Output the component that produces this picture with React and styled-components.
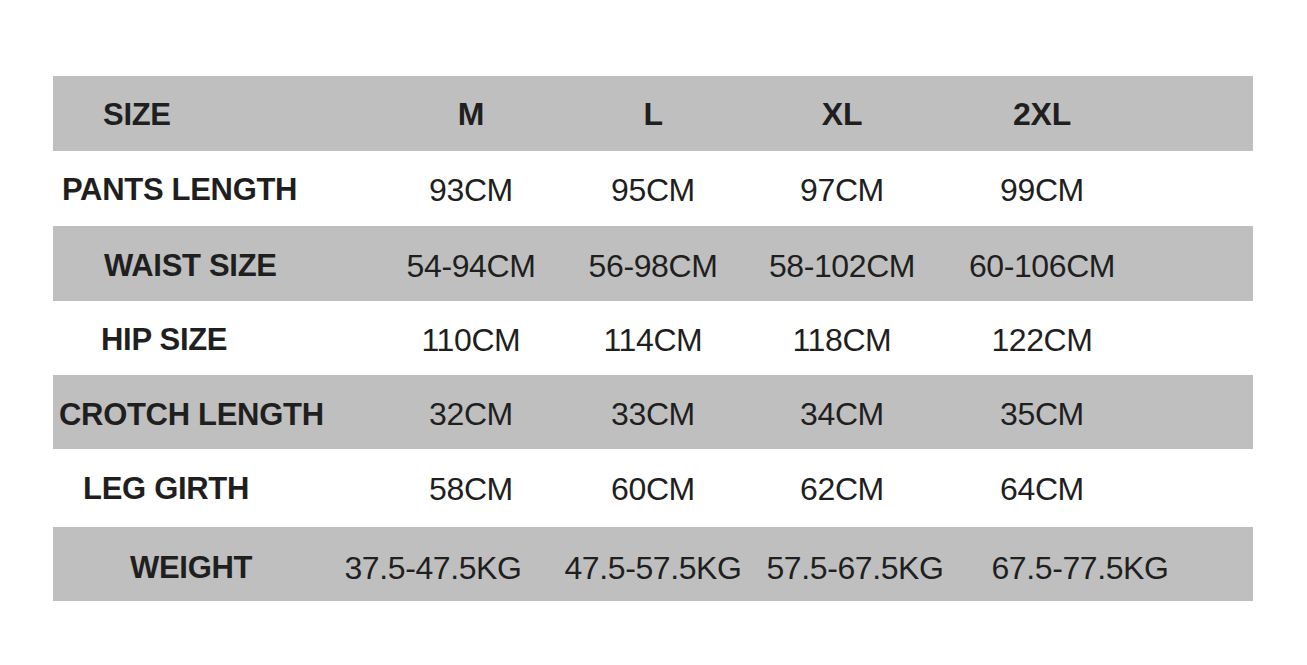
import React from "react";
import styled, { createGlobalStyle } from "styled-components";

const Global = createGlobalStyle`
  html, body { margin: 0; padding: 0; background: #ffffff; }
  body { font-family: "Liberation Sans", Arial, sans-serif; }
`;

const Page = styled.div`
  width: 1307px;
  height: 665px;
  padding: 76px 0 0 53px;
  box-sizing: border-box;
  background: #fff;
`;

const Table = styled.div`
  width: 1200px;
  display: flex;
  flex-direction: column;
`;

const Row = styled.div`
  display: grid;
  grid-template-columns: 327px 182px 182px 196px 204px 1fr;
  height: ${(p) => p.$h || 75}px;
  box-sizing: border-box;
  padding-top: ${(p) => p.$drop || 4}px;
  align-items: center;
  background: ${(p) => (p.$shaded ? "#bfbfbf" : "#ffffff")};
  color: #1f1f1f;
`;

const Label = styled.div`
  padding-left: ${(p) => p.$indent}px;
  font-weight: 700;
  font-size: 31px;
  letter-spacing: -0.3px;
  white-space: nowrap;
`;

const Cell = styled.div`
  display: flex;
  justify-content: center;
  white-space: nowrap;
  font-size: 32px;
  font-weight: ${(p) => (p.$bold ? 700 : 400)};
  letter-spacing: ${(p) => (p.$bold ? "-0.3px" : "-0.4px")};
  padding-left: ${(p) => Math.max(0, (p.$shift || 0) * 2)}px;
  padding-right: ${(p) => Math.max(0, -(p.$shift || 0) * 2)}px;
`;

const rows = [
  { label: "SIZE", indent: 50, values: ["M", "L", "XL", "2XL"], header: true, drop: 2 },
  { label: "PANTS LENGTH", indent: 9, values: ["93CM", "95CM", "97CM", "99CM"], drop: 3 },
  { label: "WAIST SIZE", indent: 51, values: ["54-94CM", "56-98CM", "58-102CM", "60-106CM"], drop: 5 },
  { label: "HIP SIZE", indent: 48, values: ["110CM", "114CM", "118CM", "122CM"], h: 74, drop: 4 },
  { label: "CROTCH LENGTH", indent: 6, values: ["32CM", "33CM", "34CM", "35CM"], h: 74, drop: 5 },
  { label: "LEG GIRTH", indent: 30, values: ["58CM", "60CM", "62CM", "64CM"], h: 78, drop: 2 },
  {
    label: "WEIGHT",
    indent: 77,
    values: ["37.5-47.5KG", "47.5-57.5KG", "57.5-67.5KG", "67.5-77.5KG"],
    shifts: [-38, 0, 13, 38],
    h: 74,
    drop: 8,
  },
];

export default function App() {
  return (
    <>
      <Global />
      <Page>
        <Table>
          {rows.map((r, i) => (
            <Row key={r.label} $shaded={i % 2 === 0} $h={r.h} $drop={r.drop}>
              <Label $indent={r.indent}>{r.label}</Label>
              {r.values.map((v, j) => (
                <Cell key={j} $bold={r.header} $shift={r.shifts ? r.shifts[j] : 0}>
                  {v}
                </Cell>
              ))}
              <div />
            </Row>
          ))}
        </Table>
      </Page>
    </>
  );
}
